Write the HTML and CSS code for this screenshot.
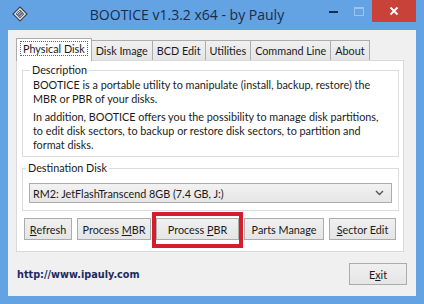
FILE: index.html
```html
<!DOCTYPE html>
<html>
<head>
<meta charset="utf-8">
<link rel="stylesheet" href="styles.css">
</head>
<body>
<div class="window">
  <div class="titlebar">
    <svg class="app-icon" width="16" height="16" viewBox="0 0 16 16">
      <polygon points="8,1 15,8 8,15 1,8" fill="#eef2f6" stroke="#3a4450" stroke-width="1.2"/>
      <polygon points="8,3.5 12.5,8 8,12.5 3.5,8" fill="#56606c"/>
      <line x1="5" y1="8" x2="8" y2="5" stroke="#e6e9ee" stroke-width="0.8"/>
      <line x1="6" y1="9.5" x2="9.5" y2="6" stroke="#e6e9ee" stroke-width="0.8"/>
      <line x1="7.5" y1="11" x2="11" y2="7.5" stroke="#e6e9ee" stroke-width="0.8"/>
    </svg>
    <div class="title">BOOTICE v1.3.2 x64 - by Pauly</div>
    <div class="controls">
      <div class="ctl min"><span class="min-bar"></span></div>
      <div class="ctl max"><span class="max-box"></span></div>
      <div class="ctl close">
        <svg width="10" height="10" viewBox="0 0 10 10"><path d="M1.5 1.5 L8.5 8.5 M8.5 1.5 L1.5 8.5" stroke="#fff" stroke-width="1.8"/></svg>
      </div>
    </div>
  </div>
  <div class="client">
    <div class="tabs">
      <div class="tab active"><span class="focus">Physical Disk</span></div>
      <div class="tab">Disk Image</div>
      <div class="tab">BCD Edit</div>
      <div class="tab">Utilities</div>
      <div class="tab">Command Line</div>
      <div class="tab">About</div>
    </div>
    <div class="panel">
      <fieldset class="group desc">
        <legend>Description</legend>
        <p>BOOTICE is a portable utility to manipulate (install, backup, restore) the<br>MBR or PBR of your disks.</p>
        <p>In addition, BOOTICE offers you the possibility to manage disk partitions,<br>to edit disk sectors, to backup or restore disk sectors, to partition and<br>format disks.</p>
      </fieldset>
      <fieldset class="group dest">
        <legend>Destination Disk</legend>
        <div class="combo">
          <span>RM2: JetFlashTranscend 8GB (7.4 GB, J:)</span>
          <svg width="9" height="6" viewBox="0 0 9 6"><path d="M1 1 L4.5 4.5 L8 1" fill="none" stroke="#555" stroke-width="1.4"/></svg>
        </div>
      </fieldset>
      <div class="buttons">
        <div class="btn b-refresh"><u>R</u>efresh</div>
        <div class="btn b-mbr">Process <u>M</u>BR</div>
        <div class="btn b-pbr">Process <u>P</u>BR<span class="highlight"></span></div>
        <div class="btn b-parts">Parts Manage</div>
        <div class="btn b-sector"><u>S</u>ector Edit</div>
      </div>
    </div>
    <div class="footer">
      <span class="link">http://www.ipauly.com</span>
      <div class="btn b-exit">E<u>x</u>it</div>
    </div>
  </div>
</div>
</body>
</html>
```
FILE: styles.css
```css
html, body {
  margin: 0;
  padding: 0;
}
body {
  width: 424px;
  height: 304px;
  background: #63a2e3;
  font-family: Lato, "Noto Sans", sans-serif;
  font-size: 10.8px;
  color: #1a1a1a;
  overflow: hidden;
}
.window {
  display: flex;
  flex-direction: column;
  height: 304px;
}
.titlebar {
  height: 30px;
  display: flex;
  align-items: flex-start;
}
.app-icon {
  margin: 6px 0 0 12px;
}
.title {
  flex: 1;
  text-align: center;
  font-family: "Open Sans", sans-serif;
  font-size: 14px;
  line-height: 29px;
  color: #1c2b47;
  padding-left: 26px;
}
.controls {
  display: flex;
  margin-right: 8px;
}
.ctl {
  height: 22px;
  display: flex;
  align-items: center;
  justify-content: center;
}
.min { width: 26px; }
.max { width: 26px; }
.min-bar {
  width: 9px;
  height: 2px;
  background: #1c2b47;
  margin-top: 2px;
}
.max-box {
  width: 8px;
  height: 6px;
  border: 1px solid #9fc3ea;
  border-top-width: 2px;
}
.close {
  width: 44px;
  background: #c8423a;
}
.client {
  flex: 1;
  margin: 0 8px 8px 8px;
  background: #f0f0f0;
  padding: 8px 12px 0 8px;
  display: flex;
  flex-direction: column;
}
.tabs {
  display: flex;
  align-items: flex-end;
  height: 22px;
  position: relative;
  z-index: 1;
}
.tab {
  flex: none;
  white-space: nowrap;
  height: 20px;
  line-height: 19px;
  padding: 0 4px;
  border: 1px solid #acacac;
  border-bottom: none;
  margin-left: -1px;
  background: linear-gradient(#f0f0f0, #e5e5e5);
  box-sizing: border-box;
}
.tab:first-child { margin-left: 0; }
.tab.active {
  height: 23px;
  margin-bottom: -1px;
  background: #fff;
  padding: 0 3px;
  line-height: 20px;
  position: relative;
  z-index: 2;
}
.focus {
  display: inline-block;
  border: 1px dotted #666;
  padding: 0 2px;
  line-height: 13px;
}
.panel {
  height: 192px;
  box-sizing: border-box;
  background: #fff;
  border: 1px solid #d9d9d9;
  padding: 2px 4px 0 5px;
  display: flex;
  flex-direction: column;
}
.group {
  margin: 0;
  border: 1px solid #dcdcdc;
  min-width: 0;
}
.group legend {
  padding: 0 2px;
  margin-left: -3px;
  line-height: 14px;
}
.desc {
  padding: 1px 10px 4px 10px;
}
.desc p {
  margin: 0;
  line-height: 14px;
  white-space: nowrap;
}
.desc p + p {
  margin-top: 4px;
}
.dest {
  margin-top: 4px;
  padding: 8px 6px 7px 6px;
}
.combo {
  height: 20px;
  box-sizing: border-box;
  border: 1px solid #acacac;
  background: linear-gradient(#f2f2f2, #e6e6e6);
  display: flex;
  align-items: center;
  justify-content: space-between;
  padding: 0 7px 0 3px;
}
.buttons {
  display: flex;
  margin-top: 7px;
  margin-left: 2px;
}
.btn {
  height: 22px;
  box-sizing: border-box;
  border: 1px solid #acacac;
  background: linear-gradient(#f0f0f0, #e5e5e5);
  display: flex;
  align-items: center;
  justify-content: center;
  white-space: pre;
}
.btn u { text-decoration: underline; text-underline-offset: 1px; }
.b-refresh { width: 48px; }
.b-mbr { width: 74px; margin-left: 5px; }
.b-pbr { width: 83px; margin-left: 5px; position: relative; }
.b-parts { width: 80px; margin-left: 5px; }
.b-sector { width: 67px; margin-left: 5px; }
.highlight {
  position: absolute;
  left: -5px;
  top: -7px;
  width: 91px;
  height: 36px;
  box-sizing: border-box;
  border: 4px solid #d21f2b;
}
.footer {
  flex: 1;
  display: flex;
  align-items: center;
  justify-content: space-between;
  padding-left: 1px;
  margin-right: -3px;
}
.link {
  font-family: "DejaVu Sans", sans-serif;
  font-weight: bold;
  font-size: 9.7px;
  color: #1d2a5e;
}
.b-exit {
  width: 58px;
}
```
